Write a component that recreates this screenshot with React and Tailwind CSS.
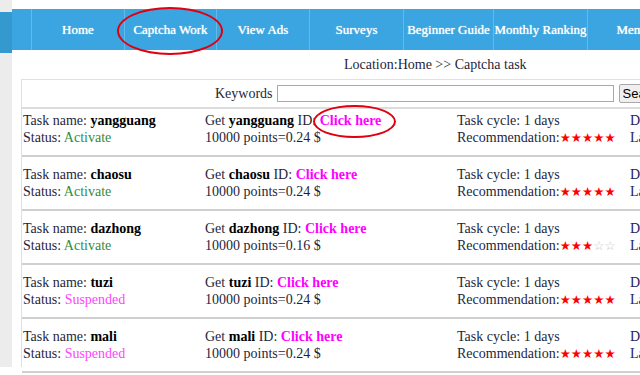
import React from 'react'

const NAV = [
  { label: 'Home', w: 'w-[93px]' },
  { label: 'Captcha Work', w: 'w-[92px]' },
  { label: 'View Ads', w: 'w-[93px]' },
  { label: 'Surveys', w: 'w-[94px]' },
  { label: 'Beginner Guide', w: 'w-[90px]' },
  { label: 'Monthly Ranking', w: 'w-[94px]' },
  { label: 'Member Center', w: 'w-[140px]' },
]

const TASKS = [
  { name: 'yangguang', active: true, rate: '0.24', stars: 5 },
  { name: 'chaosu', active: true, rate: '0.24', stars: 5 },
  { name: 'dazhong', active: true, rate: '0.16', stars: 3 },
  { name: 'tuzi', active: false, rate: '0.24', stars: 5 },
  { name: 'mali', active: false, rate: '0.24', stars: 5 },
]

function Stars({ n }) {
  return (
    <span className="[font-family:'DejaVu_Sans',sans-serif] text-[12.5px]">
      <span className="text-[#ff0000]">{'★'.repeat(n)}</span>
      <span className="text-[#c8c8c8]">{'☆'.repeat(5 - n)}</span>
    </span>
  )
}

function TaskRow({ t, first }) {
  return (
    <div className={`flex leading-[17px] pb-[9px] border-b-2 border-[#d0d0d0] ${first ? 'pt-[3px]' : 'pt-[9px]'}`}>
      <div className="w-[183px] shrink-0 pl-[1px]">
        <div>Task name: <b className="text-black">{t.name}</b></div>
        <div>
          Status:{' '}
          {t.active
            ? <span className="text-[#2f8b3c]">Activate</span>
            : <span className="text-[#ff44ff]">Suspended</span>}
        </div>
      </div>
      <div className="w-[252px] shrink-0">
        <div>
          Get <b className="text-black">{t.name}</b> ID: <b className="text-[#ff00ff]">Click here</b>
        </div>
        <div>10000 points={t.rate} $</div>
      </div>
      <div className="w-[173px] shrink-0">
        <div>Task cycle: 1 days</div>
        <div className="whitespace-nowrap">Recommendation:<Stars n={t.stars} /></div>
      </div>
      <div className="shrink-0 whitespace-nowrap text-[#1a2460]">
        <div>Daily limit</div>
        <div>Last update</div>
      </div>
    </div>
  )
}

export default function App() {
  return (
    <div className="relative w-[640px] h-[375px] overflow-hidden bg-white flex [font-family:'Liberation_Serif',serif] text-[14px] text-[#1f1f3a]">
      {/* left strip */}
      <div className="w-[12px] h-[367px] shrink-0 bg-[#ececec] pt-[12px]">
        <div className="h-[41px] bg-[#3399cf]" />
      </div>

      <div className="flex-1 min-w-0 pt-[9px]">
        {/* nav */}
        <div className="h-[41px] bg-[#3aa5e0] flex whitespace-nowrap">
          <div className="w-[19px] shrink-0" />
          {NAV.map(n => (
            <div key={n.label}
              className={`${n.w} shrink-0 border-l border-[#62b9ea] flex items-center justify-center text-white text-[13px] [text-shadow:0_0_1px_#ffffff]`}>
              {n.label}
            </div>
          ))}
        </div>

        {/* location */}
        <div className="h-[29px] flex items-center pl-[332px] whitespace-nowrap">
          Location:Home &gt;&gt; Captcha task
        </div>

        {/* content box */}
        <div className="ml-[9px] h-[288px] border-l border-t border-[#d6e2f3] w-[700px]">
          <div className="h-[29px] flex items-center border-b-2 border-[#dcdcdc] pl-[193px] whitespace-nowrap">
            <span>Keywords</span>
            <input className="ml-[4px] w-[337px] h-[17px] border border-[#a9a9a9] bg-white" />
            <button className="ml-[5px] h-[19px] px-[3px] border border-[#a9a9a9] bg-[#efefef] rounded-[2px] [font-family:'Liberation_Sans',sans-serif] text-[13px] text-black leading-[16px]">
              Search
            </button>
          </div>
          {TASKS.map((t, i) => <TaskRow key={t.name} t={t} first={i === 0} />)}
        </div>
      </div>

      {/* red annotation ellipses */}
      <div className="absolute left-[117px] top-[7px] w-[106px] h-[48px] rounded-[50%] border-2 border-[#e0000f]" />
      <div className="absolute left-[313px] top-[105px] w-[83px] h-[33px] rounded-[50%] border-2 border-[#e0000f]" />
    </div>
  )
}
